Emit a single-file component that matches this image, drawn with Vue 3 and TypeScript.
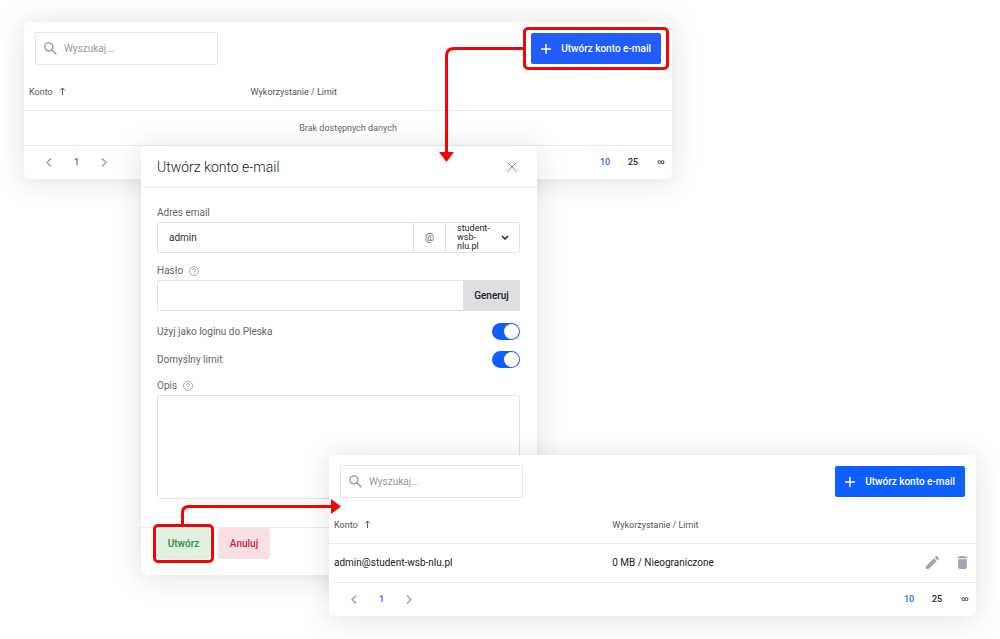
<script setup lang="ts">
import { ref } from 'vue'

interface Account {
  address: string
  usage: string
}

interface Panel {
  id: string
  highlighted: boolean
  accounts: Account[]
}

const panels: Panel[] = [
  { id: 'empty', highlighted: true, accounts: [] },
  {
    id: 'filled',
    highlighted: false,
    accounts: [{ address: 'admin@student-wsb-nlu.pl', usage: '0 MB / Nieograniczone' }],
  },
]

const pageSizes = ['10', '25', '∞']
const pageSize = ref('10')
const login = ref('admin')
const password = ref('')
const domain = ref('student-wsb-nlu.pl')
const pleskLogin = ref(true)
const defaultLimit = ref(true)
const description = ref('')
</script>

<template>
  <main class="stage">
    <section v-for="panel in panels" :key="panel.id" class="panel" :class="panel.id">
      <div class="toolbar">
        <label class="search">
          <svg class="search-icon" viewBox="0 0 14 14" aria-hidden="true">
            <circle cx="5.200" cy="5.200" r="4.300" />
            <path d="M8.300 8.300l5 5" />
          </svg>
          <input type="search" placeholder="Wyszukaj..." aria-label="Wyszukaj" />
        </label>
        <div class="create">
          <button type="button" class="primary">
            <svg class="plus" viewBox="0 0 10 10" aria-hidden="true"><path d="M5 0v10M0 5h10" /></svg>
            Utwórz konto e-mail
          </button>
          <template v-if="panel.highlighted">
            <span class="frame wide"></span>
            <svg class="arrow down" viewBox="0 0 86 116" aria-hidden="true">
              <path class="line" d="M86 2.500H16Q8.500 2.500 8.500 10V108" />
              <path class="head" d="M1 106h15l-7.500 10z" />
            </svg>
          </template>
        </div>
      </div>

      <table>
        <thead>
          <tr>
            <th class="account" scope="col">
              Konto
              <svg class="sort" viewBox="0 0 7 8" aria-hidden="true"><path d="M3.500 8V1M1 3.500L3.500 1L6 3.500" /></svg>
            </th>
            <th scope="col">Wykorzystanie / Limit</th>
            <th class="actions" scope="col" aria-label="Akcje"></th>
          </tr>
        </thead>
        <tbody>
          <tr v-if="panel.accounts.length === 0">
            <td class="none" colspan="3">Brak dostępnych danych</td>
          </tr>
          <tr v-for="item in panel.accounts" :key="item.address">
            <td>{{ item.address }}</td>
            <td>{{ item.usage }}</td>
            <td class="actions">
              <div class="tools">
                <button type="button" aria-label="Edytuj">
                  <svg viewBox="3 3 18 18" aria-hidden="true">
                    <path d="M3 17.250V21h3.750L17.810 9.940l-3.750-3.750L3 17.250zM20.710 7.040a1 1 0 0 0 0-1.410l-2.340-2.340a1 1 0 0 0-1.410 0l-1.830 1.830 3.750 3.750 1.830-1.830z" />
                  </svg>
                </button>
                <button type="button" aria-label="Usuń">
                  <svg viewBox="3 3 18 18" aria-hidden="true">
                    <path d="M6 19c0 1.100.9 2 2 2h8c1.100 0 2-.9 2-2V7.500H6V19zM19 4h-3.500l-1-1h-5l-1 1H5v2h14V4z" />
                  </svg>
                </button>
              </div>
            </td>
          </tr>
        </tbody>
      </table>

      <nav class="pager" aria-label="Strony">
        <div class="pages">
          <button type="button" aria-label="Poprzednia">
            <svg viewBox="0 0 6 9" aria-hidden="true"><path d="M5 .5L1 4.500l4 4" /></svg>
          </button>
          <button type="button" class="current">1</button>
          <button type="button" aria-label="Następna">
            <svg viewBox="0 0 6 9" aria-hidden="true"><path d="M1 .5l4 4-4 4" /></svg>
          </button>
        </div>
        <div class="sizes">
          <button
            v-for="size in pageSizes"
            :key="size"
            type="button"
            :class="{ current: size === pageSize, unlimited: size === '∞' }"
            @click="pageSize = size"
          >
            {{ size }}
          </button>
        </div>
      </nav>
    </section>

    <form class="dialog" @submit.prevent>
      <header>
        <h2>Utwórz konto e-mail</h2>
        <button type="button" class="close" aria-label="Zamknij">
          <svg viewBox="0 0 10 10" aria-hidden="true"><path d="M.5.5l9 9M9.500.5l-9 9" /></svg>
        </button>
      </header>

      <div class="fields">
        <div class="field">
          <label for="login">Adres email</label>
          <div class="group">
            <input id="login" v-model="login" type="text" />
            <span class="at">@</span>
            <div class="domain">
              <select v-model="domain" aria-label="Domena">
                <option>student-wsb-nlu.pl</option>
              </select>
              <svg viewBox="0 0 8 6" aria-hidden="true"><path d="M1 1l3 3 3-3" /></svg>
            </div>
          </div>
        </div>

        <div class="field">
          <label for="password">
            Hasło
            <svg class="help" viewBox="0 0 10 10" aria-hidden="true">
              <circle cx="5" cy="5" r="4.500" />
              <path d="M3.500 4q0-1.500 1.500-1.500T6.500 4Q6.500 4.700 5 5.300V6M5 7v1" />
            </svg>
          </label>
          <div class="group">
            <input id="password" v-model="password" type="password" />
            <button type="button" class="generate">Generuj</button>
          </div>
        </div>

        <div class="switches">
          <label>Użyj jako loginu do Pleska <input v-model="pleskLogin" type="checkbox" role="switch" /></label>
          <label>Domyślny limit <input v-model="defaultLimit" type="checkbox" role="switch" /></label>
        </div>

        <div class="field">
          <label for="description">
            Opis
            <svg class="help" viewBox="0 0 10 10" aria-hidden="true">
              <circle cx="5" cy="5" r="4.500" />
              <path d="M3.500 4q0-1.500 1.500-1.500T6.500 4Q6.500 4.700 5 5.300V6M5 7v1" />
            </svg>
          </label>
          <textarea id="description" v-model="description"></textarea>
        </div>
      </div>

      <footer>
        <div class="create">
          <button type="submit" class="confirm">Utwórz</button>
          <span class="frame"></span>
          <svg class="arrow right" viewBox="0 0 162 27" aria-hidden="true">
            <path class="line" d="M2.500 27V15Q2.500 8.500 9 8.500H153" />
            <path class="head" d="M151 1l10 7.500-10 7.500z" />
          </svg>
        </div>
        <button type="button" class="cancel">Anuluj</button>
      </footer>
    </form>
  </main>
</template>

<style>
body {
  margin: 0;
  background: #fff;
}
</style>

<style scoped>
.stage {
  display: grid;
  align-items: start;
  box-sizing: border-box;
  min-height: 100vh;
  overflow: hidden;
  font-family: Roboto, 'Liberation Sans', sans-serif;
  font-size: 10px;
  line-height: 12px;
  color: #222;
}

.stage * {
  box-sizing: border-box;
}

button,
input,
select,
textarea {
  margin: 0;
  padding: 0;
  border: 0;
  font: inherit;
  color: inherit;
  background: none;
}

svg {
  display: block;
  flex: none;
  fill: none;
  stroke: currentColor;
}

.panel,
.dialog {
  grid-area: 1 / 1;
  background: #fff;
  border-radius: 5px;
  box-shadow: 0 2px 28px rgba(0, 0, 0, 0.13);
}

.empty {
  margin: 22px 32.8% 0 2.4%;
}

.dialog {
  order: 1;
  margin: 146px 46.3% 0 14.1%;
}

.filled {
  order: 2;
  margin: 455px 2.4% 0 32.9%;
}

.toolbar {
  display: flex;
  align-items: center;
  justify-content: space-between;
  padding: 10px 11px;
}

.search {
  display: flex;
  align-items: center;
  gap: 7px;
  width: 183px;
  height: 33px;
  padding: 0 8px;
  border: 1px solid #e5e5e7;
  border-radius: 2px;
}

.search-icon {
  width: 13px;
  height: 13px;
  color: #999;
  stroke-width: 1.5;
}

.search input {
  flex: 1;
  min-width: 0;
  outline: 0;
}

.search input::placeholder {
  color: #999;
  opacity: 1;
}

.create {
  position: relative;
}

.primary {
  display: flex;
  align-items: center;
  gap: 10px;
  height: 31px;
  padding: 0 10px;
  border-radius: 2px;
  font-weight: 500;
  color: #fff;
  background: #0f5fff;
}

.empty .primary {
  background: #215dfa;
}

.plus {
  width: 10px;
  height: 10px;
  stroke-width: 1.4;
}

.frame {
  position: absolute;
  inset: -4px;
  border: 3px solid #f20505;
  border-radius: 5px;
  pointer-events: none;
}

.wide {
  inset: -6px -8px;
}

.arrow {
  position: absolute;
  z-index: 3;
  pointer-events: none;
}

.arrow .line {
  stroke: #f20505;
  stroke-width: 3;
}

.arrow .head {
  fill: #f20505;
  stroke: none;
}

.down {
  top: 13px;
  right: calc(100% + 7px);
  width: 86px;
  height: 116px;
}

.right {
  bottom: calc(100% + 3px);
  left: 23px;
  width: 162px;
  height: 27px;
}

table {
  width: 100%;
  border-collapse: collapse;
  table-layout: fixed;
}

th,
td {
  height: 35px;
  padding: 0 5px;
  border-bottom: 1px solid #ececee;
  text-align: left;
  font-weight: 400;
}

th {
  font-size: 9px;
  color: #555;
}

.account {
  width: 34.2%;
}

.filled .account {
  width: 43%;
}

.filled td {
  height: 39px;
}

.sort {
  display: inline-block;
  width: 7px;
  height: 8px;
  margin-left: 4px;
}

.panel .none {
  font-size: 9px;
  text-align: center;
  color: #666;
}

.actions {
  width: 60px;
}

.tools {
  display: flex;
  justify-content: flex-end;
  gap: 17px;
  padding-right: 2px;
}

.tools svg {
  width: 13px;
  height: 13px;
  fill: #a3a3b0;
  stroke: none;
}

.pager {
  display: flex;
  align-items: center;
  justify-content: space-between;
  height: 33px;
  padding: 0 3px 0 22px;
  font-size: 9px;
  font-weight: 500;
}

.pages,
.sizes {
  display: flex;
  align-items: center;
  gap: 22px;
}

.sizes {
  gap: 12px;
}

.sizes button {
  width: 16px;
}

.sizes .unlimited {
  font-size: 7px;
}

.pages svg {
  width: 6px;
  height: 9px;
  color: #999;
  stroke-width: 1.2;
}

.pages .current,
.sizes .current {
  color: #2865ef;
}

.dialog header {
  display: flex;
  align-items: center;
  justify-content: space-between;
  height: 42px;
  padding: 0 20px 0 16px;
  border-bottom: 1px solid #ececee;
}

h2 {
  margin: 0;
  font-size: 14px;
  line-height: 18px;
  font-weight: 300;
}

.close svg {
  width: 10px;
  height: 10px;
  color: #888;
}

.fields {
  display: flex;
  flex-direction: column;
  gap: 12px;
  padding: 19px 17px 28px 16px;
  color: #666;
}

.field {
  display: flex;
  flex-direction: column;
  gap: 3px;
}

.field label {
  display: flex;
  align-items: center;
  gap: 6px;
}

.help {
  width: 10px;
  height: 10px;
  color: #888;
  stroke-width: 0.7;
}

.group {
  display: flex;
  height: 31px;
  border: 1px solid #e2e2e4;
  border-radius: 2px;
}

.group input {
  flex: 1;
  min-width: 0;
  padding: 0 11px;
  color: #333;
}

.at {
  display: flex;
  align-items: center;
  justify-content: center;
  width: 33px;
  border: solid #dcdce0;
  border-width: 0 1px;
}

.domain {
  display: flex;
  align-items: center;
  width: 73px;
  padding: 0 10px 0 11px;
  color: #222;
}

select {
  flex: 1;
  min-width: 0;
  padding-right: 8px;
  appearance: none;
  white-space: normal;
  font-size: 9px;
  line-height: 9px;
}

.domain svg {
  width: 8px;
  height: 6px;
  stroke-width: 1.5;
}

.generate {
  width: 57px;
  margin: -1px;
  border-radius: 0 2px 2px 0;
  font-weight: 500;
  color: #222;
  background: #dedfe3;
}

.switches {
  display: flex;
  flex-direction: column;
  gap: 11px;
}

.switches label {
  display: flex;
  align-items: center;
  justify-content: space-between;
}

.switches input {
  display: flex;
  justify-content: flex-end;
  appearance: none;
  width: 28px;
  height: 17px;
  padding: 1px;
  border-radius: 9px;
  background: #0f5fff;
}

.switches input:not(:checked) {
  justify-content: flex-start;
  background: #bbb;
}

.switches input::before {
  content: '';
  width: 15px;
  height: 15px;
  border-radius: 50%;
  background: #fff;
}

textarea {
  display: block;
  height: 104px;
  padding: 8px 11px;
  border: 1px solid #e2e2e4;
  border-radius: 2px;
  resize: none;
}

.dialog footer {
  display: flex;
  gap: 8px;
  padding: 0 16px 16px;
  border-top: 1px solid #ececee;
}

.confirm,
.cancel {
  width: 53px;
  height: 31px;
  border-radius: 3px;
  font-weight: 500;
}

.cancel {
  width: 52px;
  color: #c9243f;
  background: #f9e0e3;
}

.confirm {
  color: #2d8f3c;
  background: #e0f1e0;
}
</style>
